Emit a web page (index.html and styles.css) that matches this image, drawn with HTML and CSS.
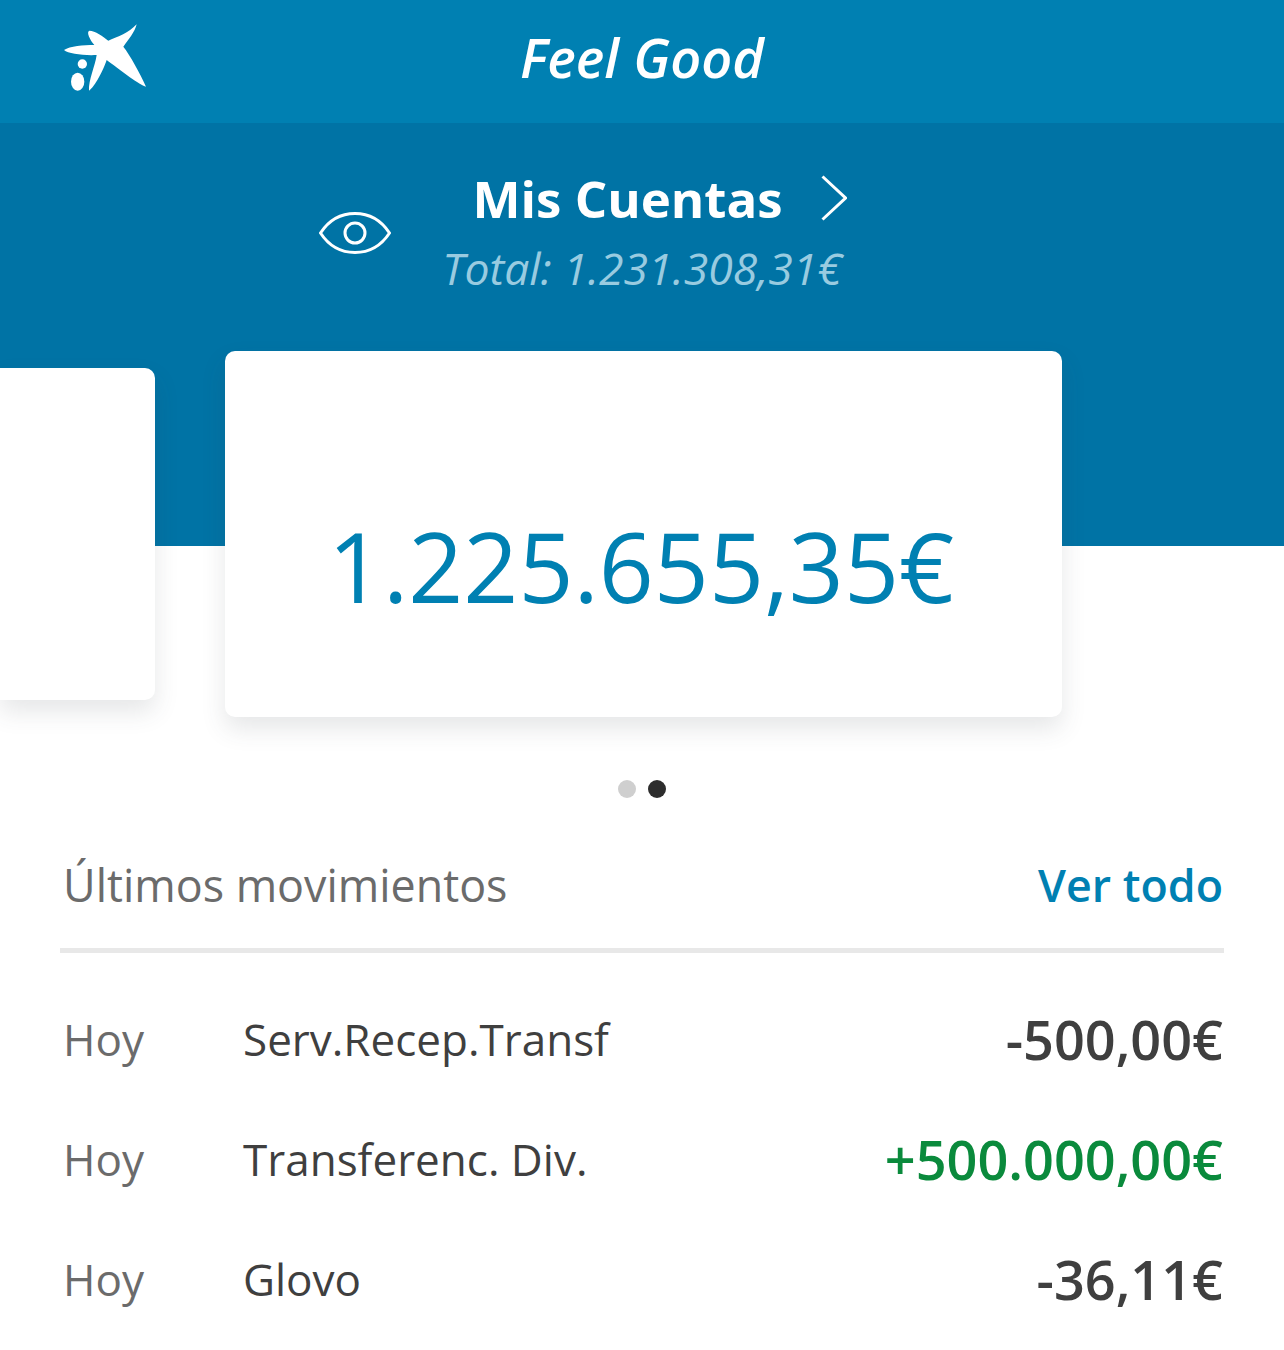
FILE: index.html
```html
<!DOCTYPE html>
<html lang="es">
<head>
  <meta charset="UTF-8" />
  <title>Feel Good</title>
  <link rel="stylesheet" href="styles.css">
</head>
<body>
  <header class="topbar">
    <svg class="logo" viewBox="60 60 270 225" aria-hidden="true">
      <path d="M290 73C265 100 235 110 205 122C190 110 165 92 148 92C138 95 150 120 163 135C130 135 90 138 72 150C85 161 130 167 170 165C165 200 145 240 147 272C165 260 190 210 200 180C235 205 290 250 318 260C300 220 270 165 250 140C265 120 285 95 290 73Z"/>
      <circle cx="127" cy="192" r="14"/>
      <ellipse cx="113" cy="245" rx="20" ry="27"/>
    </svg>
    <h1 class="topbar-title">Feel Good</h1>
  </header>

  <section class="hero">
    <svg class="eye" viewBox="0 0 72 42" aria-hidden="true">
      <path d="M1.5 21C10 8 22 1.5 36 1.5S62 8 70.500 21C62 34 50 40.500 36 40.500S10 34 1.500 21Z"/>
      <circle cx="36" cy="21" r="10"/>
    </svg>
    <div class="hero-text">
      <div class="hero-title">
        <span>Mis Cuentas</span>
        <svg class="chevron" viewBox="0 0 26 46" aria-hidden="true"><path d="M1.500 1.500L24.500 23L1.500 44.500"/></svg>
      </div>
      <div class="hero-total">Total: 1.231.308,31€</div>
    </div>
  </section>

  <div class="carousel">
    <div class="card card-side"></div>
    <div class="card card-main">1.225.655,35€</div>
  </div>

  <div class="dots">
    <span class="dot"></span>
    <span class="dot active"></span>
  </div>

  <main class="moves">
    <div class="moves-head">
      <span class="moves-title">Últimos movimientos</span>
      <a class="moves-link">Ver todo</a>
    </div>
    <div class="move">
      <span class="move-date">Hoy</span>
      <span class="move-name">Serv.Recep.Transf</span>
      <span class="move-amount">-500,00€</span>
    </div>
    <div class="move">
      <span class="move-date">Hoy</span>
      <span class="move-name">Transferenc. Div.</span>
      <span class="move-amount positive">+500.000,00€</span>
    </div>
    <div class="move">
      <span class="move-date">Hoy</span>
      <span class="move-name">Glovo</span>
      <span class="move-amount">-36,11€</span>
    </div>
  </main>
</body>
</html>
```

FILE: styles.css
```css
html, body {
  margin: 0;
  height: 1350px;
  overflow: hidden;
}
body {
  font-family: "Open Sans", sans-serif;
  background: #fff;
}
.topbar {
  height: 123px;
  background: #0080b2;
  display: flex;
  align-items: center;
  justify-content: center;
  position: relative;
  box-sizing: border-box;
  padding-bottom: 10px;
}
.logo {
  position: absolute;
  left: 60px;
  top: 20px;
  width: 90px;
  height: 75px;
  fill: #fff;
}
.topbar-title {
  margin: 0;
  font-size: 54px;
  font-weight: 600;
  font-style: italic;
  color: #fff;
}
.hero {
  height: 423px;
  background: #0073a5;
  position: relative;
  box-sizing: border-box;
  padding-top: 43px;
}
.eye {
  position: absolute;
  left: 319px;
  top: 89px;
  width: 72px;
  height: 42px;
  fill: none;
  stroke: #fff;
  stroke-width: 3;
}
.hero-text {
  text-align: center;
}
.hero-title {
  display: flex;
  justify-content: center;
  align-items: center;
  gap: 38px;
  margin-left: 35px;
  font-size: 51px;
  font-weight: 700;
  line-height: 64px;
  color: #fff;
}
.chevron {
  width: 26px;
  height: 46px;
  fill: none;
  stroke: #fff;
  stroke-width: 3;
}
.hero-total {
  font-size: 44.5px;
  font-style: italic;
  font-weight: 400;
  line-height: 60px;
  margin-top: 8px;
  color: #99cbe0;
}
.carousel {
  display: flex;
  align-items: center;
  gap: 70px;
  margin-top: -195px;
  position: relative;
}
.card {
  background: #fff;
  border-radius: 10px;
  box-shadow: 0 12px 24px rgba(60, 70, 80, 0.13);
}
.card-side {
  flex: 0 0 155px;
  height: 332px;
  border-radius: 0 10px 10px 0;
}
.card-main {
  flex: 0 0 837px;
  height: 366px;
  display: flex;
  align-items: center;
  justify-content: center;
  padding: 62px 5px 0 0;
  box-sizing: border-box;
  font-size: 96.3px;
  color: #0080b2;
}
.dots {
  display: flex;
  justify-content: center;
  gap: 12px;
  margin-top: 63px;
}
.dot {
  width: 18px;
  height: 18px;
  border-radius: 50%;
  background: #cfcfcf;
}
.dot.active {
  background: #2d2d2d;
}
.moves {
  padding: 0 60px;
}
.moves-head {
  display: flex;
  justify-content: space-between;
  align-items: center;
  height: 155px;
  box-sizing: border-box;
  padding: 22px 1px 0 3px;
  border-bottom: 5px solid #e8e8e8;
  font-size: 44.8px;
}
.moves-title {
  color: #6b6b6b;
}
.moves-link {
  color: #0080b2;
  font-weight: 600;
}
.move {
  display: flex;
  align-items: center;
  height: 120px;
  padding: 0 1px 0 3px;
  font-size: 44px;
  color: #3f3f3f;
}
.moves-head + .move {
  margin-top: 26px;
}
.move-date {
  flex: 0 0 180px;
  color: #6b6b6b;
}
.move-name {
  flex: 1;
}
.move-amount {
  font-size: 54px;
  font-weight: 600;
}
.move-amount.positive {
  color: #0a8a3c;
}
```
